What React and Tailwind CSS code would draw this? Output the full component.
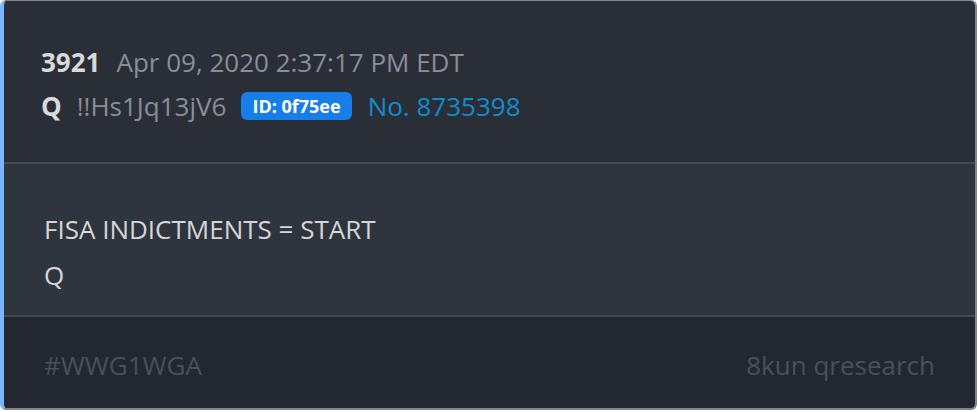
const post = {
  num: '3921',
  date: 'Apr 09, 2020 2:37:17 PM EDT',
  name: 'Q',
  trip: '!!Hs1Jq13jV6',
  id: '0f75ee',
  no: '8735398',
  lines: ['FISA INDICTMENTS = START', 'Q'],
  tag: '#WWG1WGA',
  source: '8kun qresearch',
};

export default function App() {
  return (
    <div className="w-[978px] h-[412px] bg-white font-['Open_Sans',sans-serif]">
      <div className="w-[977px] overflow-hidden rounded-md border border-t-[1.5px] border-[#80858e] border-r-2 border-b-2 border-l-4 border-l-[#7ab6ff]">
        {/* header */}
        <div className="bg-[#2a2e37] pl-[37px] pt-[39px] pb-[34px] border-b-2 border-[#434953] text-[26px] leading-[44px]">
          <div className="flex items-center gap-[16px]">
            <span className="font-bold text-[#d9d9d9]">{post.num}</span>
            <span className="text-[#898e98]">{post.date}</span>
          </div>
          <div className="flex items-center">
            <span className="font-bold text-[#d9d9d9] mr-[15px]">{post.name}</span>
            <span className="text-[#898e98] mr-[15px]">{post.trip}</span>
            <span className="h-[28px] px-[11px] rounded-[6px] bg-[#177ee9] text-white text-[18px] font-bold leading-[28px] mr-[16px]">
              ID: {post.id}
            </span>
            <span className="text-[#128bcc]">No. {post.no}</span>
          </div>
        </div>

        {/* body */}
        <div className="bg-[#2f353f] pl-[40px] pt-[42px] pb-[17px] border-b-2 border-[#434953] text-[26px] leading-[46px] text-[#d6d6d6]">
          {post.lines.map((l, i) => (
            <p key={i}>{l}</p>
          ))}
        </div>

        {/* footer */}
        <div className="bg-[#23272f] pl-[40px] pr-[40px] pt-[26px] pb-[21px] flex justify-between text-[26px] leading-[44px] text-[#4a505a]">
          <span>{post.tag}</span>
          <span>{post.source}</span>
        </div>
      </div>
    </div>
  );
}
